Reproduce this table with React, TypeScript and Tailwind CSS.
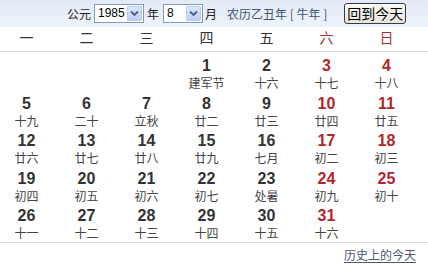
import React from 'react';

type Day = { d: number; l: string; red?: boolean };

const rows: (Day | null)[][] = [
  [null, null, null, { d: 1, l: '建军节' }, { d: 2, l: '十六' }, { d: 3, l: '十七', red: true }, { d: 4, l: '十八', red: true }],
  [{ d: 5, l: '十九' }, { d: 6, l: '二十' }, { d: 7, l: '立秋' }, { d: 8, l: '廿二' }, { d: 9, l: '廿三' }, { d: 10, l: '廿四', red: true }, { d: 11, l: '廿五', red: true }],
  [{ d: 12, l: '廿六' }, { d: 13, l: '廿七' }, { d: 14, l: '廿八' }, { d: 15, l: '廿九' }, { d: 16, l: '七月' }, { d: 17, l: '初二', red: true }, { d: 18, l: '初三', red: true }],
  [{ d: 19, l: '初四' }, { d: 20, l: '初五' }, { d: 21, l: '初六' }, { d: 22, l: '初七' }, { d: 23, l: '处暑' }, { d: 24, l: '初九', red: true }, { d: 25, l: '初十', red: true }],
  [{ d: 26, l: '十一' }, { d: 27, l: '十二' }, { d: 28, l: '十三' }, { d: 29, l: '十四' }, { d: 30, l: '十五' }, { d: 31, l: '十六', red: true }, null],
];

const weekdays = ['一', '二', '三', '四', '五', '六', '日'];

const FakeSelect = ({ value, width }: { value: string; width: string }) => (
  <div className={`flex h-[19px] items-stretch border border-[#7f9db9] bg-white ${width}`}>
    <span className="flex-1 pl-[3px] text-[12px] leading-[17px] text-black font-['Liberation_Sans',sans-serif]">{value}</span>
    <span className="m-[1px] flex w-[15px] items-center justify-center rounded-[1px] border border-[#b8cbf0] bg-gradient-to-b from-[#dbe6fb] to-[#bdd0f5]">
      <svg width="9" height="7" viewBox="0 0 9 7">
        <path d="M1 1.5 L4.5 5 L8 1.5" fill="none" stroke="#4d6185" strokeWidth="1.8" />
      </svg>
    </span>
  </div>
);

export default function App() {
  return (
    <div className="w-[428px] h-[268px] bg-white overflow-hidden font-['Noto_Sans_CJK_SC',sans-serif] text-[#333]">
      {/* top bar */}
      <div className="flex h-[27px] items-center bg-gradient-to-b from-[#e2eaf6] to-[#eef3fa] pl-[67px] text-[12px]">
        <span className="text-[#222]">公元</span>
        <div className="ml-[3px]"><FakeSelect value="1985" width="w-[50px]" /></div>
        <span className="ml-[3px] text-[#222]">年</span>
        <div className="ml-[4px]"><FakeSelect value="8" width="w-[40px]" /></div>
        <span className="ml-[2px] text-[#222]">月</span>
        <span className="ml-[10px] text-[#3f5670]">农历乙丑年 [ 牛年 ]</span>
        <button className="ml-[17px] h-[21px] w-[62px] rounded-[3px] border border-[#3c3c3c] bg-gradient-to-b from-[#fbfbf9] to-[#e6e4dc] text-[14px] leading-[17px] text-black">
          回到今天
        </button>
      </div>

      {/* week header */}
      <div className="ml-[-3.5px] grid h-[25px] grid-cols-[repeat(7,60px)] border-b border-[#dddddd] pt-[2px] text-[14px] leading-[16px]">
        {weekdays.map((w, i) => (
          <div key={w} className={`text-center ${i >= 5 ? 'text-[#a3322f]' : 'text-[#333]'}`}>{w}</div>
        ))}
      </div>

      {/* days */}
      <div className="h-[191px] border-b border-[#dcdcdc] pt-[5px]">
        {rows.map((r, ri) => (
          <div key={ri} className="ml-[-3.5px] grid h-[37.5px] grid-cols-[repeat(7,60px)]">
            {r.map((c, ci) => (
              <div key={ci} className="flex flex-col items-center">
                {c && (
                  <>
                    <span className={`font-['Liberation_Sans',sans-serif] text-[16px] font-bold leading-[18px] ${c.red ? 'text-[#b3262b]' : 'text-[#333]'}`}>{c.d}</span>
                    <span className="text-[12px] leading-[16px] text-[#444]">{c.l}</span>
                  </>
                )}
              </div>
            ))}
          </div>
        ))}
      </div>

      {/* footer */}
      <div className="flex justify-end pr-[12px] pt-[4px]">
        <span className="text-[12px] leading-[16px] text-[#4e5a70] underline underline-offset-2">历史上的今天</span>
      </div>
    </div>
  );
}
